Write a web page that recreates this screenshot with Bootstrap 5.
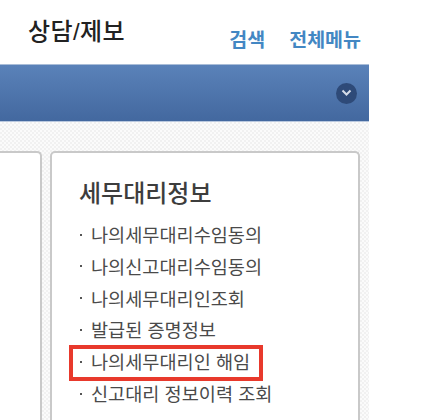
<!DOCTYPE html>
<html lang="ko">
<head>
  <meta charset="UTF-8" />
  <title>상담/제보</title>
  <meta name="viewport" content="width=device-width, initial-scale=1" />
  <link href="https://cdn.jsdelivr.net/npm/bootstrap@5.3.3/dist/css/bootstrap.min.css" rel="stylesheet" />
  <style>
    html, body {
      height: 420px;
      overflow: hidden;
      background: #fff;
    }
    body {
      font-family: "Liberation Sans", "Noto Sans CJK KR", sans-serif;
    }
    .page-wrap {
      width: 369px;
      height: 420px;
    }
    .top-head {
      height: 64px;
      padding: 17px 8px 0 28px;
    }
    .site-title {
      font-size: 24px;
      line-height: 30px;
      font-weight: 500;
      color: #222;
      letter-spacing: 0.4px;
    }
    .head-link {
      font-size: 19.5px;
      line-height: 24px;
      font-weight: 700;
      color: #4387c3;
      text-decoration: none;
      margin-top: 11px;
    }
    .blue-band {
      height: 58px;
      padding-right: 12px;
      border-top: 1px solid #a9bdd8;
      border-bottom: 1px solid #b9c8de;
      background: linear-gradient(#5a82b9, #43689f);
    }
    .round-toggle {
      width: 21px;
      height: 21px;
      border-radius: 50%;
      background: #2e4a78;
    }
    .pattern-area {
      height: 298px;
      padding: 29px 9px 0 0;
      gap: 8px;
      background-color: #fff;
      background-image: repeating-conic-gradient(#f1f1f1 0 25%, #fbfbfb 0 50%);
      background-size: 4px 4px;
    }
    .menu-box {
      background: #fff;
      border: 2px solid #c9c9c9;
      border-bottom: 0;
      border-radius: 5px 5px 0 0;
    }
    .menu-box-left {
      width: 42px;
      border-left: 0;
      border-top-left-radius: 0;
    }
    .menu-box-main {
      flex: 1;
      padding: 26px 0 0 27px;
    }
    .box-title {
      font-size: 24px;
      line-height: 30px;
      font-weight: 500;
      color: #3d3d3d;
      margin-bottom: 11px;
    }
    .side-item {
      height: 31.8px;
      line-height: 31.8px;
      font-size: 18.6px;
      color: #4a4a4a;
      white-space: nowrap;
    }
    .side-item::before {
      content: "";
      display: inline-block;
      width: 2px;
      height: 2px;
      margin: 0 9px 5px 1px;
      vertical-align: middle;
      background: #555;
    }
    .side-mark {
      outline: 4px solid #e8392c;
      outline-offset: -2px;
      margin-left: -8px;
      padding-left: 8px;
      width: 190px;
    }
  </style>
</head>
<body class="m-0">
  <div class="page-wrap d-flex flex-column">
    <div class="top-head d-flex justify-content-between align-items-start">
      <div class="site-title">상담/제보</div>
      <div class="d-flex gap-4">
        <a class="head-link" href="#">검색</a>
        <a class="head-link" href="#">전체메뉴</a>
      </div>
    </div>
    <div class="blue-band d-flex justify-content-end align-items-center">
      <div class="round-toggle d-flex justify-content-center align-items-center">
        <svg width="11" height="8" viewBox="0 0 11 8"><path d="M1.5 1.5 5.5 5.5 9.5 1.5" fill="none" stroke="#d5dce8" stroke-width="2"/></svg>
      </div>
    </div>
    <div class="pattern-area d-flex">
      <div class="menu-box menu-box-left"></div>
      <div class="menu-box menu-box-main">
        <div class="box-title">세무대리정보</div>
        <ul class="list-unstyled m-0">
          <li class="side-item">나의세무대리수임동의</li>
          <li class="side-item">나의신고대리수임동의</li>
          <li class="side-item">나의세무대리인조회</li>
          <li class="side-item">발급된 증명정보</li>
          <li class="side-item side-mark">나의세무대리인 해임</li>
          <li class="side-item">신고대리 정보이력 조회</li>
        </ul>
      </div>
    </div>
  </div>
  <script src="https://cdn.jsdelivr.net/npm/bootstrap@5.3.3/dist/js/bootstrap.bundle.min.js"></script>
</body>
</html>
